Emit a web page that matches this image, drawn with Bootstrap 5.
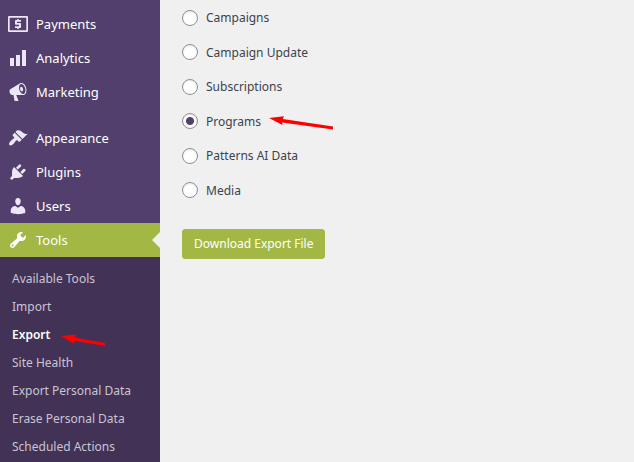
<!DOCTYPE html>
<html lang="en">
<head>
<meta charset="utf-8">
<meta name="viewport" content="width=device-width, initial-scale=1">
<title>Export</title>
<link href="https://cdn.jsdelivr.net/npm/bootstrap@5.3.0/dist/css/bootstrap.min.css" rel="stylesheet">
<style>
body { background: #f0f0f1; color: #3c434a; font-family: "Segoe UI", "Noto Sans", sans-serif; font-size: 12px; line-height: 1.625; }
.admin-side { width: 160px; background: #523f6d; padding-top: 7px; }
.side-link { height: 34px; padding-left: 8px; gap: 8px; color: #fff; font-size: 13px; line-height: 18px; }
.side-link svg { width: 20px; height: 20px; fill: #ece6f6; flex: none; }
.side-gap { height: 12px; }
.side-link.current { background: #a3b745; }
.side-link.current svg { fill: #fff; }
.side-link.current::after { content: ""; margin-left: auto; border: 8px solid transparent; border-right-color: #f0f0f1; }
.side-sub { background: #413256; padding: 8px 0 0 12px; }
.side-sub a { color: #cbc5d3; line-height: 28px; }
.side-sub a.current { color: #fff; font-weight: 600; gap: 10px; }
.export-main { padding: 8px 22px; }
.choice { gap: 8px; margin-bottom: 15px; }
.choice .form-check-input { width: 16px; height: 16px; margin: 0; border: 1px solid #8c8f94; background-color: #fff; box-shadow: inset 0 1px 2px rgba(0,0,0,.1); }
.choice .form-check-input:checked { background-image: radial-gradient(circle, #523f6d 3.5px, transparent 4.5px); }
.btn-export { --bs-btn-color: #fff; --bs-btn-bg: #a3b745; --bs-btn-border-color: #a3b745; --bs-btn-hover-color: #fff; --bs-btn-hover-bg: #92a43e; --bs-btn-padding-x: 11px; --bs-btn-padding-y: 0; --bs-btn-font-size: 12px; --bs-btn-line-height: 28px; --bs-btn-border-radius: 3px; margin-top: 14px; }
.pointer { fill: #f00; flex: none; }
</style>
</head>
<body>
<div class="d-flex min-vh-100">
  <nav class="admin-side d-flex flex-column flex-shrink-0" aria-label="Main menu">
    <a href="#" class="side-link d-flex align-items-center text-decoration-none"><svg viewBox="0 0 20 20" aria-hidden="true"><path fill-rule="evenodd" d="M1 2h18q1 0 1 1v14q0 1-1 1H1q-1 0-1-1V3q0-1 1-1zm.7 1.7v12.6h16.6V3.700z"/><path d="M9.200 5h1.600v1H13v1.700H9V9h3.200q.8 0 .8.800v3.200q0 .9-.8.900h-1.400v1.100H9.200v-1.100H7v-1.700h4v-1.500H7.800Q7 10.700 7 10V6.900Q7 6 7.800 6h1.400z"/></svg>Payments</a>
    <a href="#" class="side-link d-flex align-items-center text-decoration-none"><svg viewBox="0 0 20 20" aria-hidden="true"><path d="M2 10h4v8H2zM8 7h4v11H8zM14 2h4v16h-4z"/></svg>Analytics</a>
    <a href="#" class="side-link d-flex align-items-center text-decoration-none"><svg viewBox="0 0 20 20" aria-hidden="true"><path d="M18.150 5.940c.46 1.620.38 3.220-.02 4.480-.42 1.280-1.260 2.180-2.300 2.480-.16.060-.26.060-.4.060-.06.020-.12.020-.18.020-.06.020-.14.020-.22.020h-6.800l2.220 5.500c.02.140-.06.260-.14.340-.08.100-.24.160-.34.160H6.950c-.1 0-.26-.06-.34-.16-.08-.08-.16-.2-.14-.34l-1-5.500H4.250l-.02-.02c-.5.060-1.080-.18-1.540-.62s-.88-1.080-1.060-1.880c-.24-.8-.2-1.560-.02-2.200.18-.62.580-1.080 1.060-1.300l.02-.02 9-5.400c.1-.06.180-.1.240-.16.060-.04.140-.08.240-.12.160-.08.280-.12.500-.18 1.040-.3 2.240.1 3.220.98s1.840 2.240 2.260 3.860zm-2.580 5.980h-.02c.4-.1.740-.34 1.040-.7.580-.7.860-1.760.860-3.040 0-.64-.1-1.300-.28-1.980-.34-1.360-1.020-2.500-1.780-3.240s-1.680-1.100-2.460-.88c-.82.220-1.400.960-1.700 2-.32 1.040-.28 2.360.060 3.720.38 1.360 1 2.500 1.800 3.240.78.740 1.620 1.100 2.480.88zm-2.540-7.080c.22-.04.42-.02.620.04.38.160.760.480 1.020 1s.42 1.200.42 1.780c0 .3-.04.560-.12.800-.18.480-.44.840-.86.940-.34.100-.8-.06-1.140-.4s-.64-.86-.78-1.500c-.18-.62-.12-1.240.02-1.720s.48-.84.820-.94z"/></svg>Marketing</a>
    <div class="side-gap"></div>
    <a href="#" class="side-link d-flex align-items-center text-decoration-none"><svg viewBox="0 0 20 20" aria-hidden="true"><path d="M14.480 11.060L7.410 3.990l1.500-1.500c.5-.56 2.300-.47 3.510.32 1.210.8 1.430 1.280 2.910 2.100 1.180.64 2.450 1.260 4.450.85zm-.71.710L6.700 4.700 4.930 6.470c-.39.39-.39 1.020 0 1.410l1.060 1.060c.39.39.39 1.030 0 1.420-.6.6-1.430 1.110-2.210 1.690-.35.260-.7.530-1.010.84C1.430 14.230.4 16.080 1.400 17.070c.99 1 2.840-.03 4.180-1.360.31-.31.580-.66.850-1.020.57-.78 1.080-1.610 1.690-2.210.39-.39 1.020-.39 1.410 0l1.060 1.060c.39.39 1.020.39 1.410 0z"/></svg>Appearance</a>
    <a href="#" class="side-link d-flex align-items-center text-decoration-none"><svg viewBox="0 0 20 20" aria-hidden="true"><path d="M13.110 4.360L9.870 7.600 8 5.730l3.240-3.240c.35-.34 1.050-.2 1.560.32.52.51.66 1.210.31 1.550zm-8 1.770l.91-1.120 9.010 9.010-1.190.84c-.71.71-2.630 1.160-3.820 1.160H6.140L4.900 17.260c-.59.59-1.540.59-2.120 0-.59-.58-.59-1.530 0-2.120l1.240-1.240v-3.880c0-1.130.4-3.190 1.090-3.890zm7.260 3.970l3.240-3.240c.34-.35 1.040-.21 1.550.31.52.51.66 1.210.31 1.550l-3.240 3.250z"/></svg>Plugins</a>
    <a href="#" class="side-link d-flex align-items-center text-decoration-none"><svg viewBox="0 0 20 20" aria-hidden="true"><path d="M10 9.250c-2.270 0-2.730-3.440-2.730-3.440C7 4.020 7.820 2 9.970 2c2.160 0 2.980 2.020 2.710 3.810 0 0-.41 3.440-2.680 3.440zm0 2.570L12.720 10c2.390 0 4.520 2.330 4.520 4.530v2.490s-3.650 1.130-7.240 1.130c-3.650 0-7.240-1.130-7.240-1.130v-2.490c0-2.250 1.940-4.480 4.470-4.480z"/></svg>Users</a>
    <a href="#" class="side-link current d-flex align-items-center text-decoration-none"><svg viewBox="0 0 20 20" aria-hidden="true"><path d="M16.680 9.770c-1.340 1.340-3.300 1.670-4.950.99l-5.410 6.520c-.99.99-2.590.99-3.580 0s-.99-2.590 0-3.570l6.520-5.420c-.68-1.650-.35-3.610.99-4.950 1.280-1.280 3.120-1.620 4.720-1.060l-2.890 2.890 2.820 2.820 2.860-2.870c.53 1.580.18 3.390-1.080 4.650zM3.810 16.210c.4.39 1.040.39 1.430 0 .4-.4.4-1.040 0-1.430-.39-.4-1.030-.4-1.430 0-.39.39-.39 1.030 0 1.430z"/></svg>Tools</a>
    <div class="side-sub d-flex flex-column flex-grow-1">
      <a href="#" class="text-decoration-none">Available Tools</a>
      <a href="#" class="text-decoration-none">Import</a>
      <a href="#" class="current text-decoration-none d-flex align-items-end" aria-current="page">Export<svg class="pointer" width="46" height="16" viewBox="0 0 46 16" aria-hidden="true"><path d="M1 3 16 1.500 14.800 4.500 45 10v3L14.200 7.700 14.400 11z"/></svg></a>
      <a href="#" class="text-decoration-none">Site Health</a>
      <a href="#" class="text-decoration-none">Export Personal Data</a>
      <a href="#" class="text-decoration-none">Erase Personal Data</a>
      <a href="#" class="text-decoration-none">Scheduled Actions</a>
    </div>
  </nav>
  <main class="export-main flex-grow-1">
    <form>
      <div class="choice d-flex align-items-center"><input class="form-check-input" type="radio" name="content" id="c1"><label for="c1">Campaigns</label></div>
      <div class="choice d-flex align-items-center"><input class="form-check-input" type="radio" name="content" id="c2"><label for="c2">Campaign Update</label></div>
      <div class="choice d-flex align-items-center"><input class="form-check-input" type="radio" name="content" id="c3"><label for="c3">Subscriptions</label></div>
      <div class="choice d-flex align-items-center"><input class="form-check-input" type="radio" name="content" id="c4" checked><label for="c4">Programs</label><svg class="pointer" width="66" height="18" viewBox="0 0 66 18" aria-hidden="true"><path d="M0 6 15 4.200 13.800 7 64 14.500v3L13.200 10.400 13.400 13z"/></svg></div>
      <div class="choice d-flex align-items-center"><input class="form-check-input" type="radio" name="content" id="c5"><label for="c5">Patterns AI Data</label></div>
      <div class="choice d-flex align-items-center"><input class="form-check-input" type="radio" name="content" id="c6"><label for="c6">Media</label></div>
      <button type="button" class="btn btn-export">Download Export File</button>
    </form>
  </main>
</div>
<script src="https://cdn.jsdelivr.net/npm/bootstrap@5.3.0/dist/js/bootstrap.bundle.min.js"></script>
</body>
</html>
